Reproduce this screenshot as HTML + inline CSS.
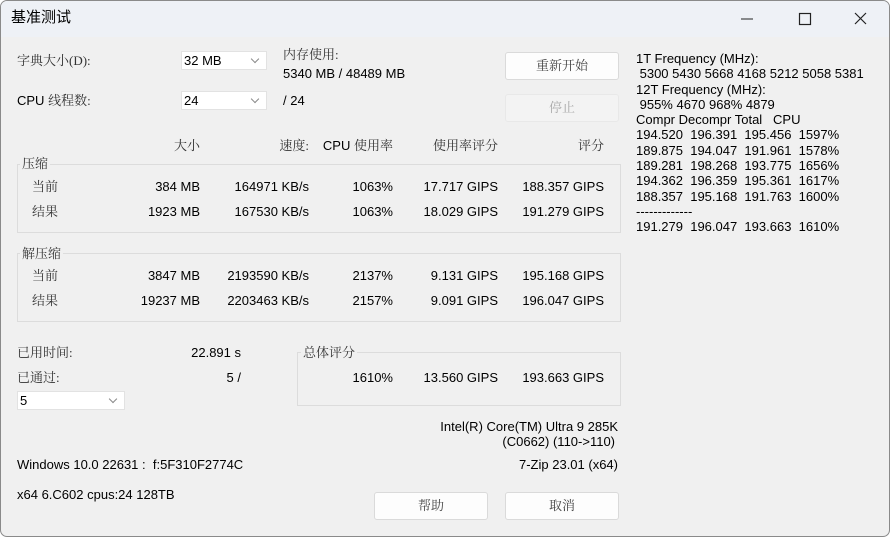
<!DOCTYPE html>
<html><head><meta charset="utf-8"><style>
body{margin:0;width:890px;height:537px;overflow:hidden;background:#fff;font-family:"Liberation Sans","Noto Sans CJK SC",sans-serif;font-size:13px;color:#000}
.win{position:absolute;left:0;top:0;width:888px;height:535px;border:1px solid #8a8a8a;border-radius:7px;background:#f0f0f0;overflow:hidden}
.title{position:absolute;left:0;top:0;width:100%;height:36px;background:#eef1f6}
.t{position:absolute;white-space:nowrap;line-height:16px}
.r{text-align:right}
.s{font-family:"Liberation Serif","Noto Serif CJK SC",serif;color:#333}
.box{position:absolute;border:1px solid #dcdcdc}
.cb{position:absolute;background:#fff;border:1px solid #e2e2e2;height:19px;box-sizing:border-box}
.cb span{position:absolute;left:2px;top:1px;line-height:16px}
.cb i{position:absolute;right:8px;top:4px;width:5px;height:5px;border-right:1px solid #888;border-bottom:1px solid #888;transform:rotate(45deg)}
.btn{position:absolute;width:114px;height:28px;background:#fdfdfd;border:1px solid #dadada;border-radius:3px;box-sizing:border-box;text-align:center;line-height:26px;font-family:"Liberation Serif","Noto Serif CJK SC",serif;color:#444}
.lbl{position:absolute;background:#f0f0f0;padding:0 2px;line-height:16px;font-family:"Liberation Serif","Noto Serif CJK SC",serif;color:#333}
</style></head><body><div class="win">
<div class="title"></div>
<div class="t" style="left:10px;top:9px;font-size:15px;font-family:'Liberation Sans','Noto Sans CJK SC',sans-serif">基准测试</div>
<svg style="position:absolute;left:740px;top:10px" width="140" height="16"><line x1="0" y1="8" x2="12" y2="8" stroke="#222" stroke-width="1"/><rect x="58.5" y="2.5" width="11" height="11" fill="none" stroke="#222" stroke-width="1.2"/><path d="M114 2L125 13M125 2L114 13" stroke="#222" stroke-width="1.2"/></svg>

<div class="t s" style="left:16px;top:52px">字典大小(D):</div>
<div class="cb" style="left:180px;top:50px;width:86px"><span>32 MB</span><i></i></div>
<div class="t s" style="left:282px;top:46px">内存使用:</div>
<div class="t" style="left:282px;top:65px">5340 MB / 48489 MB</div>
<div class="t" style="left:16px;top:92px">CPU <span class="s">线程数:</span></div>
<div class="cb" style="left:180px;top:90px;width:86px"><span>24</span><i></i></div>
<div class="t" style="left:282px;top:92px">/ 24</div>
<div class="btn" style="left:504px;top:51px">重新开始</div>
<div class="btn" style="left:504px;top:93px;color:#aaa;background:#f3f3f3;border-color:#e8e8e8">停止</div>

<div class="t r s" style="right:689px;top:137px">大小</div>
<div class="t r s" style="right:580px;top:137px">速度:</div>
<div class="t r" style="right:496px;top:137px">CPU <span class="s">使用率</span></div>
<div class="t r s" style="right:391px;top:137px">使用率评分</div>
<div class="t r s" style="right:285px;top:137px">评分</div>

<div class="box" style="left:16px;top:163px;width:602px;height:67px"></div>
<div class="lbl" style="left:19px;top:155px">压缩</div>
<div class="t s" style="left:31px;top:178px">当前</div>
<div class="t r" style="right:689px;top:178px">384 MB</div>
<div class="t r" style="right:580px;top:178px">164971 KB/s</div>
<div class="t r" style="right:496px;top:178px">1063%</div>
<div class="t r" style="right:391px;top:178px">17.717 GIPS</div>
<div class="t r" style="right:285px;top:178px">188.357 GIPS</div>
<div class="t s" style="left:31px;top:203px">结果</div>
<div class="t r" style="right:689px;top:203px">1923 MB</div>
<div class="t r" style="right:580px;top:203px">167530 KB/s</div>
<div class="t r" style="right:496px;top:203px">1063%</div>
<div class="t r" style="right:391px;top:203px">18.029 GIPS</div>
<div class="t r" style="right:285px;top:203px">191.279 GIPS</div>

<div class="box" style="left:16px;top:252px;width:602px;height:67px"></div>
<div class="lbl" style="left:19px;top:245px">解压缩</div>
<div class="t s" style="left:31px;top:267px">当前</div>
<div class="t r" style="right:689px;top:267px">3847 MB</div>
<div class="t r" style="right:580px;top:267px">2193590 KB/s</div>
<div class="t r" style="right:496px;top:267px">2137%</div>
<div class="t r" style="right:391px;top:267px">9.131 GIPS</div>
<div class="t r" style="right:285px;top:267px">195.168 GIPS</div>
<div class="t s" style="left:31px;top:292px">结果</div>
<div class="t r" style="right:689px;top:292px">19237 MB</div>
<div class="t r" style="right:580px;top:292px">2203463 KB/s</div>
<div class="t r" style="right:496px;top:292px">2157%</div>
<div class="t r" style="right:391px;top:292px">9.091 GIPS</div>
<div class="t r" style="right:285px;top:292px">196.047 GIPS</div>

<div class="t s" style="left:16px;top:344px">已用时间:</div>
<div class="t r" style="right:648px;top:344px">22.891 s</div>
<div class="t s" style="left:16px;top:369px">已通过:</div>
<div class="t r" style="right:648px;top:369px">5 /</div>
<div class="cb" style="left:16px;top:390px;width:108px"><span>5</span><i></i></div>

<div class="box" style="left:296px;top:351px;width:322px;height:52px"></div>
<div class="lbl" style="left:300px;top:344px">总体评分</div>
<div class="t r" style="right:496px;top:369px">1610%</div>
<div class="t r" style="right:391px;top:369px">13.560 GIPS</div>
<div class="t r" style="right:285px;top:369px">193.663 GIPS</div>

<div class="t r" style="right:271px;top:418px">Intel(R) Core(TM) Ultra 9 285K</div>
<div class="t r" style="right:274px;top:433px">(C0662) (110-&gt;110)</div>
<div class="t r" style="right:271px;top:456px">7-Zip 23.01 (x64)</div>
<div class="t" style="left:16px;top:456px">Windows 10.0 22631 :&nbsp; f:5F310F2774C</div>
<div class="t" style="left:16px;top:486px">x64 6.C602 cpus:24 128TB</div>
<div class="btn" style="left:373px;top:491px">帮助</div>
<div class="btn" style="left:504px;top:491px">取消</div>

<div class="t" style="left:635px;top:50px;line-height:15.3px">1T Frequency (MHz):<br>&nbsp;5300 5430 5668 4168 5212 5058 5381<br>12T Frequency (MHz):<br>&nbsp;955% 4670 968% 4879<br>Compr Decompr Total &nbsp; CPU<br>194.520 &nbsp;196.391 &nbsp;195.456 &nbsp;1597%<br>189.875 &nbsp;194.047 &nbsp;191.961 &nbsp;1578%<br>189.281 &nbsp;198.268 &nbsp;193.775 &nbsp;1656%<br>194.362 &nbsp;196.359 &nbsp;195.361 &nbsp;1617%<br>188.357 &nbsp;195.168 &nbsp;191.763 &nbsp;1600%<br>-------------<br>191.279 &nbsp;196.047 &nbsp;193.663 &nbsp;1610%</div>
</div></body></html>
